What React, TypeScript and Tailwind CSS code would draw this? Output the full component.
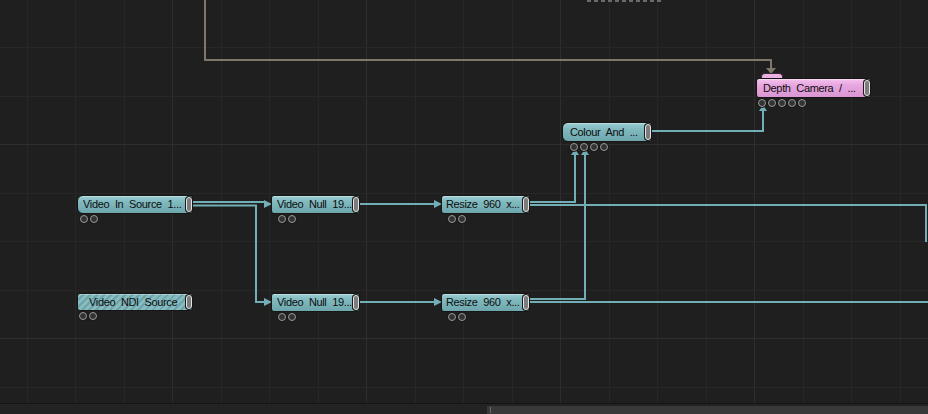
import React from "react";

type NodeProps = {
  x: number;
  y: number;
  w: number;
  h: number;
  label: string;
  pink?: boolean;
  arrow?: boolean;
  striped?: boolean;
  tab?: boolean;
  circles: number;
  cx: number;
  pl: number;
  roundLeft?: boolean;
};

const nodes: NodeProps[] = [
  { x: 77, y: 195, w: 116, h: 19, label: "Video In Source 1...", circles: 2, cx: 3, pl: 5, roundLeft: true },
  { x: 77, y: 293, w: 116, h: 18, label: "Video NDI Source", circles: 2, cx: 2, pl: 11, striped: true },
  { x: 271, y: 195, w: 89, h: 19, label: "Video Null 19...", circles: 2, cx: 7, pl: 5, arrow: true },
  { x: 271, y: 293, w: 89, h: 19, label: "Video Null 19...", circles: 2, cx: 7, pl: 5, arrow: true },
  { x: 441, y: 195, w: 89, h: 19, label: "Resize 960 x...", circles: 2, cx: 7, pl: 4, arrow: true },
  { x: 441, y: 293, w: 89, h: 19, label: "Resize 960 x...", circles: 2, cx: 7, pl: 4, arrow: true },
  { x: 562, y: 122, w: 90, h: 20, label: "Colour And ...", circles: 4, cx: 8, pl: 7, roundLeft: true },
  { x: 756, y: 78, w: 115, h: 20, label: "Depth Camera / ...", circles: 5, cx: 2, pl: 6, pink: true, tab: true },
];

function Node(p: NodeProps) {
  const bg = p.pink
    ? "bg-[linear-gradient(180deg,#f4c3ee_0%,#e7a6df_35%,#da95d2_100%)]"
    : p.striped
    ? "bg-[repeating-linear-gradient(135deg,#84bcc1_0px,#84bcc1_3px,#6fa3a8_3px,#6fa3a8_5px)]"
    : "bg-[linear-gradient(180deg,#9acdd2_0%,#80b9be_35%,#6da7ad_100%)]";
  return (
    <div className="absolute" style={{ left: p.x, top: p.y }}>
      {p.tab && (
        <div className="absolute left-[5px] top-[-5px] w-[22px] h-[7px] rounded-t-[4px] bg-[#eab1e3] border border-[#3a2a38] border-b-0" />
      )}
      {p.arrow && (
        <div className="absolute left-[-7px] top-[5px] w-0 h-0 border-y-[4px] border-y-transparent border-l-[8px] border-l-[#72afb6]" />
      )}
      <div
        className={`relative flex items-center overflow-hidden border border-[#161616] ${
          p.roundLeft ? "rounded-l-[6px] rounded-r-[3px]" : "rounded-[3px]"
        } ${bg} shadow-[inset_0_1px_0_rgba(255,255,255,0.35)]`}
        style={{ width: p.w, height: p.h, paddingLeft: p.pl }}
      >
        <span className="text-[11px] leading-none text-[#0d0d0d] whitespace-nowrap [word-spacing:3px] tracking-[-0.35px]">
          {p.label}
        </span>
        <div className="absolute right-[0px] top-[1px] bottom-[1px] w-[6px] rounded-[3px] bg-[#7c7c7c] border border-[#e4e4e4] ring-1 ring-[#1c1c1c]" />
      </div>
      <div className="flex gap-[2px] mt-[1px]" style={{ marginLeft: p.cx }}>
        {Array.from({ length: p.circles }).map((_, i) => (
          <div
            key={i}
            className="w-[8px] h-[8px] rounded-full bg-[#333] border-[1.5px] border-[#9a9a9a] ring-1 ring-[#1a1a1a]"
          />
        ))}
      </div>
    </div>
  );
}

export default function App() {
  const vx = Array.from({ length: 20 }, (_, k) => ({ x: 26.6 + 48.5 * k, major: k % 4 === 3 }));
  const hy = Array.from({ length: 9 }, (_, k) => ({ y: 47.3 + 48.5 * k, major: k % 4 === 2 }));
  const teal = "#71aeb5";
  return (
    <div
      className="relative w-[928px] h-[414px] overflow-hidden bg-[#1f1f1f]"
      style={{ fontFamily: '"Liberation Sans", Arial, sans-serif' }}
    >
      <svg className="absolute inset-0" width={928} height={414}>
        {vx.map((l, i) => (
          <line
            key={"v" + i}
            x1={Math.round(l.x) + 0.5}
            x2={Math.round(l.x) + 0.5}
            y1={0}
            y2={414}
            stroke={l.major ? "#2e2e2e" : "#272727"}
            strokeWidth={1}
          />
        ))}
        {hy.map((l, i) => (
          <line
            key={"h" + i}
            y1={Math.round(l.y) + 0.5}
            y2={Math.round(l.y) + 0.5}
            x1={0}
            x2={928}
            stroke={l.major ? "#2e2e2e" : "#272727"}
            strokeWidth={1}
          />
        ))}
        <line x1={587} x2={664} y1={1} y2={1} stroke="#6a6a6a" strokeWidth={2} strokeDasharray="4 3" />
        <path d="M205 0 V60 H771 V68" fill="none" stroke="#80776b" strokeWidth={2} />
        <path d="M766 68 H776 L771 74 Z" fill="#80776b" />
        <g fill="none" stroke={teal} strokeWidth={2}>
          <path d="M193 202 H265" />
          <path d="M193 205.5 H256 V302 H265" />
          <path d="M360 204 H434" />
          <path d="M360 302 H434" />
          <path d="M530 202 H575 V154" />
          <path d="M530 205 H926 V242" />
          <path d="M530 299 H585 V154" />
          <path d="M530 302 H928" />
          <path d="M651 131 H763 V110" />
        </g>
        <g fill={teal}>
          <path d="M571 155 L579 155 L575 149 Z" />
          <path d="M581 155 L589 155 L585 149 Z" />
          <path d="M759 111 L767 111 L763 105 Z" />
        </g>
      </svg>

      {nodes.map((n, i) => (
        <Node key={i} {...n} />
      ))}

      <div className="absolute left-0 right-0 bottom-0 h-[11px] border-t border-[#141414] bg-[#232323] flex">
        <div className="w-[487px]" />
        <div className="flex-1 mt-[2px] bg-[#393939] flex items-center pl-[3px]">
          <div className="w-[1px] h-[6px] bg-[#6a6a6a]" />
        </div>
      </div>
    </div>
  );
}
